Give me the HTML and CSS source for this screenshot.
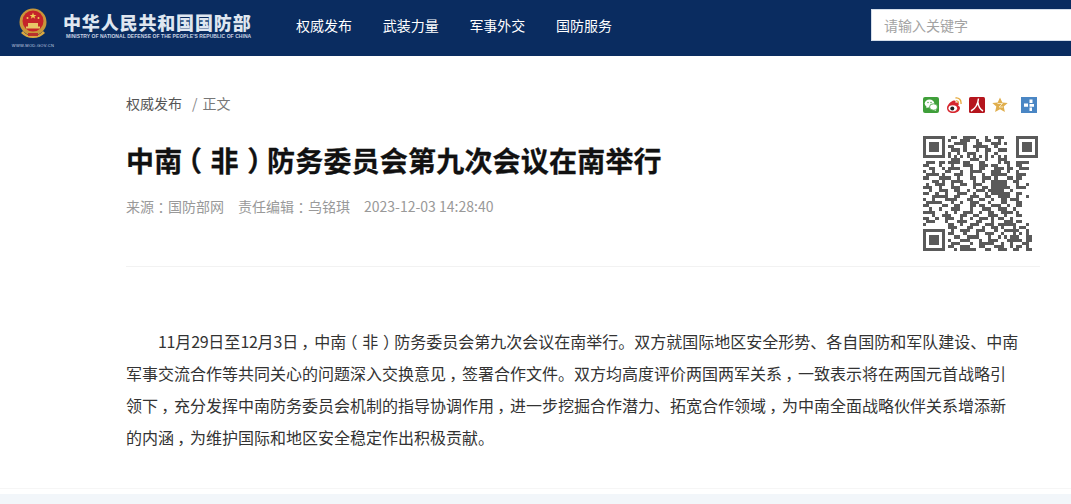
FILE: index.html
```html
<!DOCTYPE html>
<html lang="zh-CN">
<head>
<meta charset="utf-8">
<title>中南（非）防务委员会第九次会议在南举行</title>
<link rel="stylesheet" href="styles.css">
</head>
<body>
<header class="topbar">
  <div class="brand">
    <div class="emblem">
      <svg width="30" height="31" viewBox="0 0 30 31">
        <circle cx="15" cy="14" r="13.5" fill="#c9963a"/>
        <circle cx="15" cy="13" r="10.5" fill="#c5242a"/>
        <path d="M15 4.5l.9 2.4h2.5l-2 1.5.8 2.4-2.2-1.5-2.2 1.5.8-2.4-2-1.5h2.5z" fill="#f3cf55"/>
        <circle cx="9.5" cy="10" r="1" fill="#f3cf55"/>
        <circle cx="20.5" cy="10" r="1" fill="#f3cf55"/>
        <path d="M8 18.5h14v2H8zM10 15h10v3.500H10z" fill="#e8c667"/>
        <path d="M5 23c3 4 7 5 10 5s7-1 10-5l2 2c-3 3-7 5-12 5s-9-2-12-5z" fill="#d9a741"/>
        <rect x="10" y="25" width="10" height="3" fill="#b8312c"/>
      </svg>
      <span class="emblem-url">WWW.MOD.GOV.CN</span>
    </div>
    <div class="wordmark">
      <div class="wordmark-cn">中华人民共和国国防部</div>
      <div class="wordmark-en">MINISTRY OF NATIONAL DEFENSE OF THE PEOPLE'S REPUBLIC OF CHINA</div>
    </div>
  </div>
  <nav class="nav">
    <a class="nav-item">权威发布</a>
    <a class="nav-item">武装力量</a>
    <a class="nav-item">军事外交</a>
    <a class="nav-item">国防服务</a>
  </nav>
  <div class="search"><span class="search-hint">请输入关键字</span></div>
</header>

<main class="article">
  <div class="article-head">
    <div class="head-info">
      <div class="crumbs"><span>权威发布</span><span class="crumb-sep">/</span><span class="crumb-current">正文</span></div>
      <h1 class="title">中南<span class="p-open">（</span>非<span class="p-close">）</span>防务委员会第九次会议在南举行</h1>
      <div class="meta"><span>来源<span class="p-colon">：</span>国防部网</span><span>责任编辑<span class="p-colon">：</span>乌铭琪</span><span>2023-12-03 14:28:40</span></div>
    </div>
    <aside class="head-side">
      <div class="share">
        <svg class="share-icon" viewBox="0 0 16 16">
          <rect width="16" height="16" rx="2" fill="#3f9f3a"/>
          <ellipse cx="6.500" cy="6.500" rx="4.800" ry="4" fill="#fff"/>
          <path d="M4 9l-.8 2.300 2.600-1.300z" fill="#fff"/>
          <ellipse cx="10.500" cy="10" rx="4" ry="3.200" fill="#fff" stroke="#3f9f3a" stroke-width=".8"/>
          <path d="M12.500 12.500l.8 1.500-2.300-1z" fill="#fff"/>
          <circle cx="5" cy="5.500" r=".7" fill="#3f9f3a"/><circle cx="8" cy="5.500" r=".7" fill="#3f9f3a"/>
        </svg>
        <svg class="share-icon" viewBox="0 0 16 16">
          <path d="M1 11c0-3 4-7 7-7.500 1.500-.2 2 1 1.500 2.500 2-.8 3.500-.3 3.300 1.200-.1.700-.7 1-.6 1.500 1 .4 1.800 1.100 1.800 2.300C14 14 10.500 16 7 16s-6-2-6-5z" fill="#d6262e"/>
          <ellipse cx="6.800" cy="11.300" rx="4.300" ry="3.100" fill="#fff"/>
          <circle cx="6.300" cy="11.500" r="2" fill="#222"/>
          <path d="M9.500 1c3.500-.5 6 2 5.500 6" fill="none" stroke="#e5a93b" stroke-width="1.300"/>
          <path d="M9.800 3.800c2-.2 3 .9 2.700 2.700" fill="none" stroke="#e5a93b" stroke-width="1.100"/>
        </svg>
        <svg class="share-icon" viewBox="0 0 16 16">
          <rect width="16" height="16" rx="1.500" fill="#b5151d"/>
          <path d="M9.500 1.500C9 7 6.500 11.500 2 14M9 5.500c.4 4 2 6.800 5 8.500" fill="none" stroke="#fff" stroke-width="1.500"/>
        </svg>
        <svg class="share-icon" viewBox="0 0 16 16">
          <path d="M8 .5l2.300 4.900 5.400.6-4 3.600 1.200 5.400L8 12.200 3.100 15l1.200-5.400-4-3.600 5.400-.6z" fill="#e0ae4c"/>
          <path d="M5.500 6.500h5L7 10h4" fill="none" stroke="#f6e7c2" stroke-width="1"/>
        </svg>
        <svg class="share-icon share-last" viewBox="0 0 16 16">
          <rect width="16" height="16" fill="#4a86c4"/>
          <path d="M8.500 2.500h3v3.500h-3zM3 6.500h4v3.200H3zM8.500 7h4.500v2.700H8.500zM8.500 10.500h2.500v3.500H8.500z" fill="#fff"/>
        </svg>
      </div>
      <svg class="qr" viewBox="0 0 37 37" shape-rendering="crispEdges">
        <path class="qr-finder" d="M0 0h7v7H0zM1 1v5h5V1zM2 2h3v3H2zM30 0h7v7h-7zM31 1v5h5V1zM32 2h3v3h-3zM0 30h7v7H0zM1 31v5h5v-5zM2 32h3v3H2z" fill-rule="evenodd"/>
        <path class="qr-data" d="M9 .5h2m2 0h4m3 0h1m2 0h3M8 1.500h1m3 0h3m2 0h1m2 0h2m2 0h1M10 2.500h4m3 0h2m3 0h3m1 0h1M8 3.500h2m3 0h1m2 0h5m2 0h1M9 4.500h3m1 0h1m3 0h1m2 0h2m2 0h3M8 5.500h1m2 0h1m2 0h3m3 0h1m2 0h1M8 6.500h1m1 0h1m1 0h1m1 0h1m1 0h1m1 0h1m1 0h1m1 0h1m1 0h1m1 0h1M9 7.500h3m3 0h3m2 0h1m3 0h3M8 8.500h4m1 0h2m3 0h2m4 0h1m1 0h2m2 0h4M1 8.500h3m1 0h2M0 9.500h2m3 0h1m3 0h1m3 0h3m2 0h3m1 0h2m3 0h1m2 0h2M2 10.500h2m2 0h1m1 0h4m3 0h1m2 0h2m3 0h3m1 0h2m2 0h3M0 11.500h1m2 0h1m3 0h2m3 0h1m2 0h4m3 0h3m2 0h1m2 0h1M1 12.500h4m1 0h1m3 0h3m2 0h1m3 0h1m2 0h5m3 0h3M0 13.500h2m3 0h4m2 0h1m3 0h2m2 0h3m1 0h1m3 0h2m1 0h2M3 14.500h2m1 0h1m2 0h4m3 0h1m2 0h1m2 0h5m2 0h2M1 15.500h1m2 0h3m2 0h1m2 0h2m2 0h3m3 0h5m3 0h1m2 0h1M0 16.500h3m2 0h1m3 0h3m4 0h1m2 0h2m1 0h6m2 0h3M2 17.500h1m2 0h3m2 0h2m2 0h1m2 0h3m1 0h5m2 0h1M0 18.500h2m2 0h1m2 0h1m3 0h3m2 0h1m3 0h1m1 0h6m2 0h2M3 19.500h5m2 0h2m3 0h3m2 0h2m2 0h4m2 0h1m2 0h1M0 20.500h1m2 0h1m3 0h4m3 0h2m2 0h2m2 0h1m2 0h2m1 0h3M1 21.500h5m3 0h1m2 0h1m2 0h3m3 0h1m3 0h2m3 0h2M0 22.500h2m4 0h2m2 0h2m3 0h2m1 0h2m2 0h3m2 0h1m2 0h2M2 23.500h1m2 0h1m3 0h3m3 0h1m3 0h3m2 0h3m2 0h1M0 24.500h4m3 0h1m2 0h1m2 0h3m2 0h1m2 0h2m2 0h4m1 0h1M3 25.500h1m2 0h3m3 0h2m2 0h2m3 0h3m2 0h1m3 0h2M0 26.500h2m2 0h1m2 0h3m2 0h1m2 0h1m2 0h3m1 0h1m1 0h2m2 0h1M1 27.500h3m3 0h1m3 0h3m3 0h2m3 0h1m3 0h3m1 0h2M0 28.500h1m7 0h2m2 0h1m2 0h3m2 0h3m1 0h6m3 0h1M8 29.500h3m3 0h2m3 0h1m2 0h2m1 0h1m3 0h1m1 0h2M9 30.500h1m2 0h3m2 0h3m3 0h1m2 0h5m2 0h1M8 31.500h2m3 0h1m3 0h1m2 0h3m2 0h1m3 0h1m1 0h1m1 0h1M10 32.500h2m2 0h4m3 0h1m2 0h1m1 0h1m1 0h3m2 0h2M8 33.500h1m3 0h3m3 0h1m2 0h3m3 0h5m1 0h2M9 34.500h3m3 0h1m2 0h5m2 0h1m2 0h1m3 0h2M8 35.500h2m2 0h3m3 0h2m3 0h3m2 0h1m1 0h2m1 0h1M10 36.500h1m1 0h5m3 0h2m2 0h3m2 0h2m2 0h2"/>
      </svg>
    </aside>
  </div>
  <div class="article-body">
    <p class="para"><span class="num">11</span>月<span class="num">29</span>日至<span class="num">12</span>月<span class="num">3</span>日<span class="p-comma">，</span>中南<span class="p-open">（</span>非<span class="p-close">）</span>防务委员会第九次会议在南举行。双方就国际地区安全形势、各自国防和军队建设、中南军事交流合作等共同关心的问题深入交换意见<span class="p-comma">，</span>签署合作文件。双方均高度评价两国两军关系<span class="p-comma">，</span>一致表示将在两国元首战略引领下<span class="p-comma">，</span>充分发挥中南防务委员会机制的指导协调作用<span class="p-comma">，</span>进一步挖掘合作潜力、拓宽合作领域<span class="p-comma">，</span>为中南全面战略伙伴关系增添新的内涵<span class="p-comma">，</span>为维护国际和地区安全稳定作出积极贡献。</p>
  </div>
</main>
<footer class="foot"><div class="foot-band"></div></footer>
</body>
</html>
```

FILE: styles.css
```css
* { box-sizing: border-box; }
html, body { margin: 0; height: 504px; overflow: hidden; background: #fff; }
body {
  font-family: "Noto Sans CJK SC", "Liberation Sans", sans-serif;
  display: flex;
  flex-direction: column;
}
.topbar {
  height: 56px;
  flex: none;
  background: #0a2c60;
  display: flex;
  align-items: center;
  color: #fff;
}
.brand { display: flex; width: 296px; padding-left: 12px; }
.emblem { width: 42px; display: flex; flex-direction: column; align-items: center; }
.emblem svg { display: block; }
.emblem-url { font: 4px/6px "Liberation Sans", sans-serif; color: #c8d2e2; white-space: nowrap; margin-top: 4px; letter-spacing: .3px; }
.wordmark { margin-left: 9px; padding-top: 3px; }
.wordmark-cn {
  font-weight: 900;
  font-size: 18px;
  line-height: 22px;
  letter-spacing: .85px;
  color: #dfe6f0;
  white-space: nowrap;
}
.wordmark-en {
  font: 700 5px/6px "Liberation Sans", sans-serif;
  letter-spacing: .05px;
  color: #c8d2e2;
  white-space: nowrap;
  margin-left: 3px;
}
.nav { display: flex; gap: 30.700px; width: 575px; padding-bottom: 6px; }
.nav-item { font-size: 14px; line-height: 20px; color: #fff; }
.search {
  flex: 1;
  height: 32px;
  background: #fff;
  margin-top: -6px;
  border: 1px solid #d5deea;
  border-right: 0;
  padding-left: 12px;
  display: flex;
  align-items: center;
}
.search-hint { font-size: 14px; color: #a3a3a3; }
.article { flex: 1; margin-left: 126px; width: 914px; }
.article-head {
  display: flex;
  justify-content: space-between;
  height: 211px;
  border-bottom: 1px solid #f2f2f2;
}
.crumbs { margin-top: 36px; font-size: 14px; line-height: 22px; color: #555; display: flex; }
.crumb-sep { margin: 0 5px 0 10px; color: #888; }
.crumb-current { color: #777; }
.title {
  margin: 26px 0 0;
  font-size: 28px;
  line-height: 40px;
  font-weight: 700;
  letter-spacing: .2px;
  -webkit-text-stroke: .3px #111;
  color: #111;
  white-space: nowrap;
}
.p-open, .p-close, .p-comma, .p-colon { font-feature-settings: "halt"; }
.p-open { padding: 0 .3em 0 .2em; }
.p-close { padding: 0 .2em 0 .3em; }
.p-comma { padding: 0 .3em 0 .2em; }
.p-colon { padding: 0 .25em; }
.num { letter-spacing: -.3px; }
.meta { margin-top: 16px; font-size: 14px; line-height: 20px; color: #999; display: flex; gap: 14px; white-space: nowrap; }
.head-side { width: 115px; margin-right: 2px; display: flex; flex-direction: column; }
.share { display: flex; margin-top: 41px; gap: 7px; width: 115px; }
.share-icon { width: 16px; height: 16px; flex: none; }
.share-last { margin-left: 6px; }
.qr { width: 115px; height: 115px; margin-top: 23px; }
.qr-finder { fill: #5a5a5a; }
.qr-data { fill: none; stroke: #5a5a5a; stroke-width: 1; }
.article-body { padding-top: 58px; width: 893px; }
.para { margin: 0; font-size: 16px; line-height: 32px; color: #333; text-indent: 32px; }
.foot { height: 16px; flex: none; border-top: 1px solid #f6f6f6; padding-top: 5px; }
.foot-band { height: 10px; background: #f2f6fa; }
```
